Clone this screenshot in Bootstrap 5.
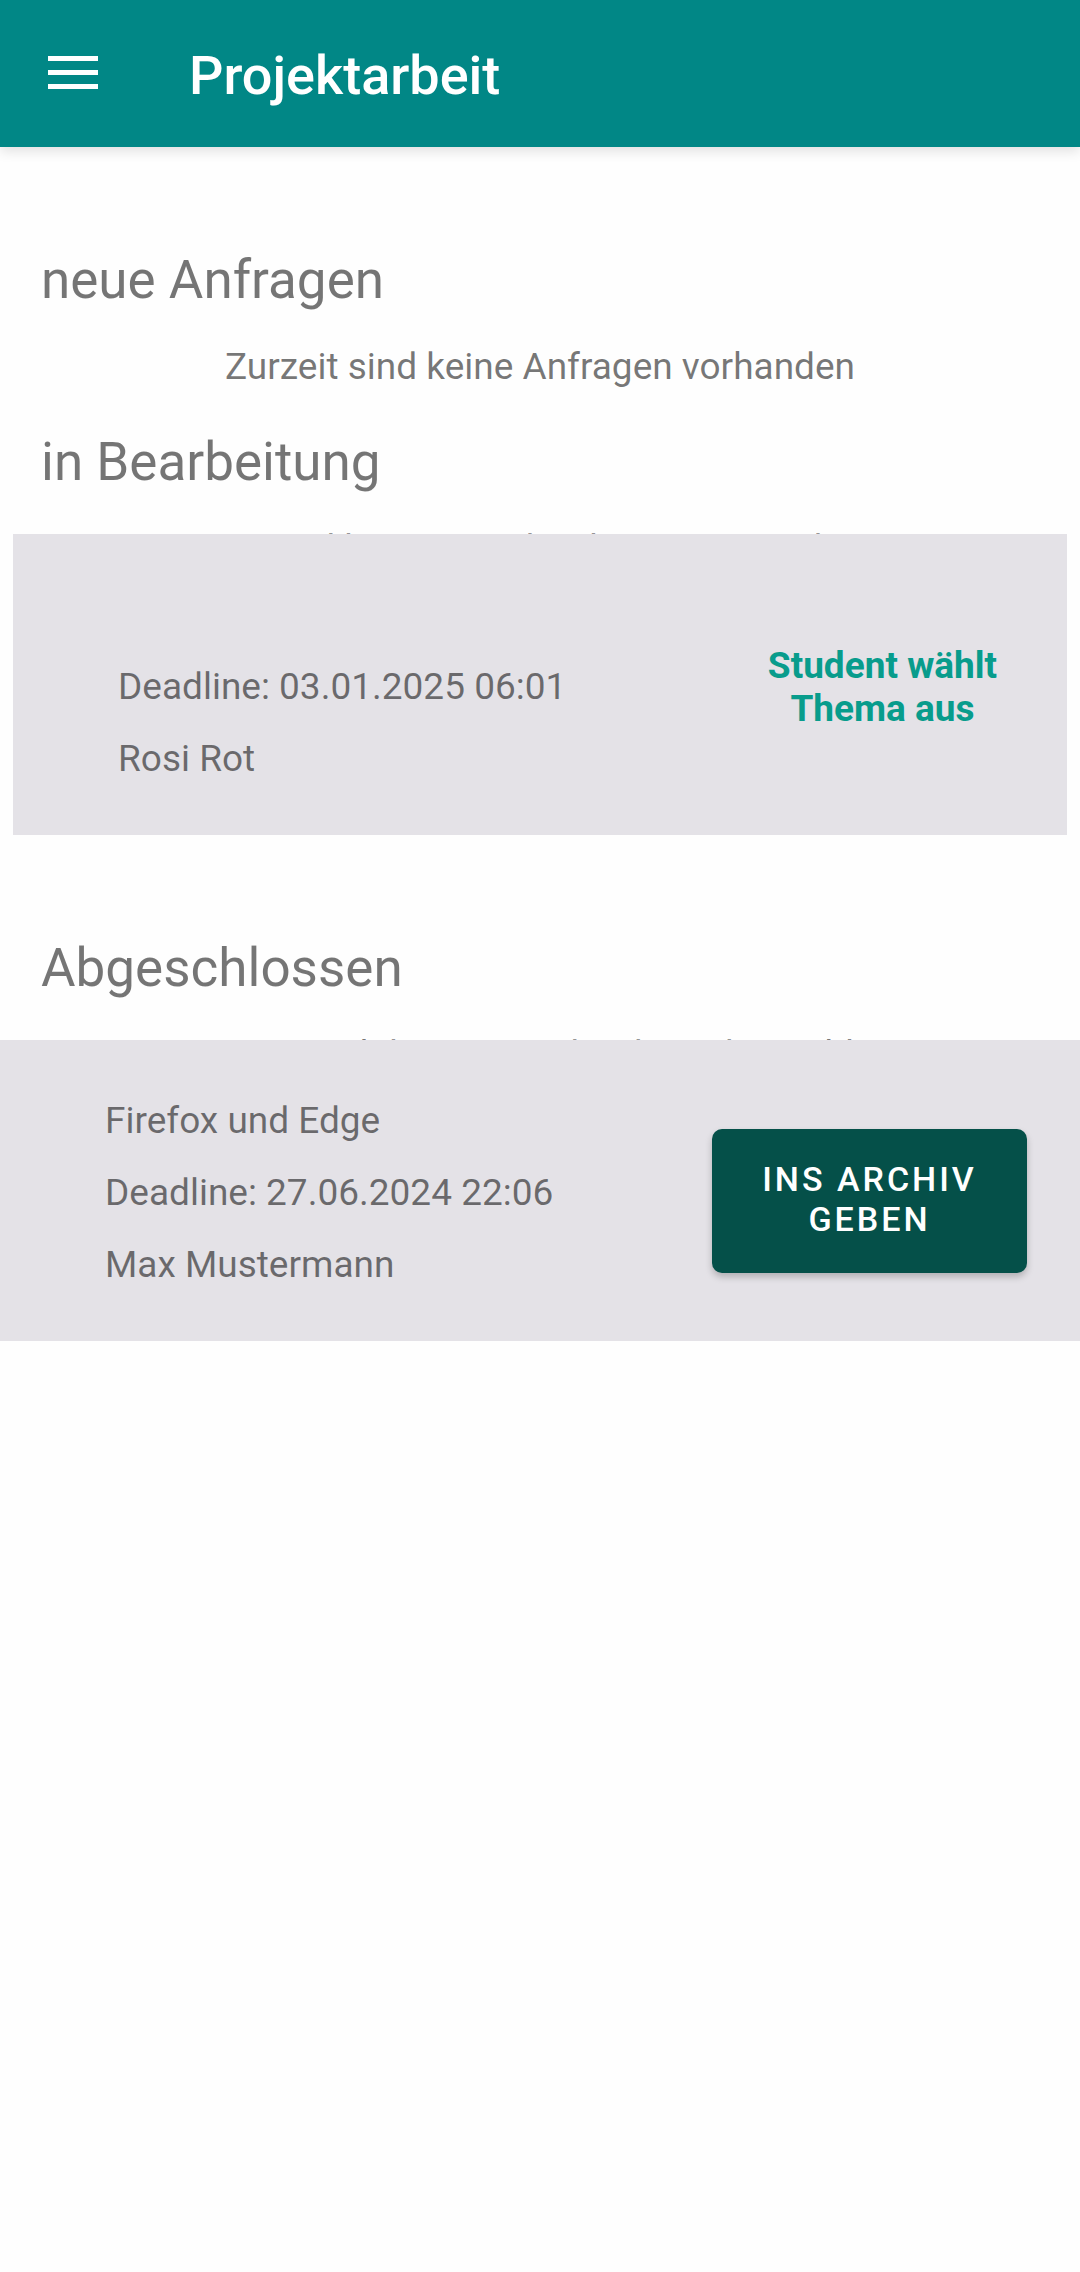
<!DOCTYPE html>
<html lang="de">
<head>
<meta charset="utf-8">
<meta name="viewport" content="width=device-width, initial-scale=1">
<title>Projektarbeit</title>
<link href="https://cdn.jsdelivr.net/npm/bootstrap@5.3.0/dist/css/bootstrap.min.css" rel="stylesheet">
<style>
  body {
    background: #fefefe;
    color: rgba(0, 0, 0, .54);
    font-family: Roboto, "Noto Sans", sans-serif;
    font-size: 37px;
    line-height: 43px;
  }
  .app-bar {
    background: #018786;
    min-height: 147px;
    padding: 0 42px;
    gap: 84px;
    box-shadow: 0 4px 12px rgba(0, 0, 0, .12);
  }
  .menu-btn { width: 63px; height: 63px; border-radius: 0; }
  .app-title { font-size: 54px; line-height: 62px; }
  .section-title { font-size: 53px; line-height: 62px; }
  .section-top { padding-top: 102px; }
  .section-next { padding-top: 43px; }
  .section-title { padding: 0 41px; margin-bottom: 34px; font-weight: 400; }
  .entry-list { margin-top: -36px; }
  .entry {
    background: #e4e2e7;
    padding: 59px 53px 55px 105px;
  }
  .entry-inset { margin: 0 13px; padding-right: 27px; }
  .entry-lines { gap: 29px; }
  .entry-line { min-height: 43px; }
  .entry-side { width: 315px; }
  .entry-status { color: #089c8c; padding: 0 40px; }
  .archive-btn {
    --bs-btn-color: #fff;
    --bs-btn-bg: #055049;
    --bs-btn-hover-color: #fff;
    --bs-btn-hover-bg: #04433d;
    --bs-btn-border-width: 0;
    --bs-btn-border-radius: 10px;
    --bs-btn-font-size: 34px;
    --bs-btn-line-height: 40px;
    --bs-btn-font-weight: 500;
    padding: 30px 42px 34px;
    letter-spacing: 3px;
    margin-top: 16px;
    box-shadow: 0 4px 7px rgba(0, 0, 0, .22);
  }
</style>
</head>
<body>
<header class="app-bar d-flex align-items-center">
  <button type="button" class="menu-btn btn p-0 border-0 d-flex flex-shrink-0" aria-label="Menü">
    <svg width="63" height="63" viewBox="0 0 63 63" fill="#fff" aria-hidden="true">
      <path d="M6 14h50v5H6zM6 28h50v5H6zM6 42h50v5H6z"/>
    </svg>
  </button>
  <h1 class="app-title text-white fw-medium m-0 pt-1">Projektarbeit</h1>
</header>

<main>
  <section class="section-top">
    <h2 class="section-title">neue Anfragen</h2>
    <p class="text-center m-0">Zurzeit sind keine Anfragen vorhanden</p>
  </section>

  <section class="section-next">
    <h2 class="section-title">in Bearbeitung</h2>
    <p class="text-center m-0">Zurzeit sind keine Projektarbeiten in Bearbeitung</p>
    <div class="entry-list position-relative">
      <article class="entry entry-inset d-flex align-items-center justify-content-between">
        <div class="entry-lines d-flex flex-column">
          <div class="entry-line"></div>
          <div class="entry-line">Deadline: 03.01.2025 06:01</div>
          <div class="entry-line">Rosi Rot</div>
        </div>
        <div class="entry-side entry-status fw-bold text-center">Student wählt Thema aus</div>
      </article>
    </div>
  </section>

  <section class="section-top">
    <h2 class="section-title">Abgeschlossen</h2>
    <p class="text-center m-0">Zurzeit ist noch keine Projektarbeit abgeschlossen</p>
    <div class="entry-list position-relative">
      <article class="entry d-flex align-items-center justify-content-between">
        <div class="entry-lines d-flex flex-column">
          <div class="entry-line">Firefox und Edge</div>
          <div class="entry-line">Deadline: 27.06.2024 22:06</div>
          <div class="entry-line">Max Mustermann</div>
        </div>
        <button type="button" class="archive-btn entry-side btn text-uppercase">Ins Archiv geben</button>
      </article>
    </div>
  </section>
</main>
<script src="https://cdn.jsdelivr.net/npm/bootstrap@5.3.0/dist/js/bootstrap.bundle.min.js"></script>
</body>
</html>
